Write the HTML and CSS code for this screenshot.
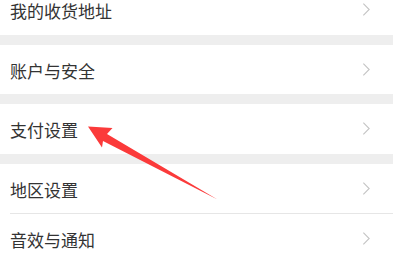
FILE: index.html
```html
<!DOCTYPE html>
<html lang="zh-CN">
<head>
    <meta charset="UTF-8">
    <meta name="viewport" content="width=device-width, initial-scale=1.0">
    <title>设置</title>
    <link rel="stylesheet" href="styles.css">
</head>
<body>
    <div class="settings">
        <div class="group">
            <div class="cell">
                <span class="cell-title">我的收货地址</span>
                <svg class="chevron" viewBox="0 0 10 16"><path d="M1.5 1.5 L8 8 L1.5 14.5"/></svg>
            </div>
        </div>
        <div class="group">
            <div class="cell">
                <span class="cell-title">账户与安全</span>
                <svg class="chevron" viewBox="0 0 10 16"><path d="M1.5 1.5 L8 8 L1.5 14.5"/></svg>
            </div>
        </div>
        <div class="group">
            <div class="cell">
                <span class="cell-title">支付设置</span>
                <svg class="chevron" viewBox="0 0 10 16"><path d="M1.5 1.5 L8 8 L1.5 14.5"/></svg>
            </div>
        </div>
        <div class="group">
            <div class="cell">
                <span class="cell-title">地区设置</span>
                <svg class="chevron" viewBox="0 0 10 16"><path d="M1.5 1.5 L8 8 L1.5 14.5"/></svg>
            </div>
            <div class="cell">
                <span class="cell-title">音效与通知</span>
                <svg class="chevron" viewBox="0 0 10 16"><path d="M1.5 1.5 L8 8 L1.5 14.5"/></svg>
            </div>
        </div>
    </div>

    <!-- 标注箭头 -->
    <svg class="pointer" width="393" height="260" viewBox="0 0 393 260">
        <polygon points="88,126.5 112.5,128 107,134 217.5,199.5 103,141 102,147.5" fill="#fb3a3a"/>
    </svg>
</body>
</html>
```

FILE: styles.css
```css
* {
    box-sizing: border-box;
}
body {
    margin: 0;
    font-family: "Noto Sans CJK SC", "Noto Sans", sans-serif;
    color: #333333;
    background-color: #ffffff;
    overflow: hidden;
}
.settings {
    margin-top: -15px;
    display: flex;
    flex-direction: column;
    gap: 10px;
    background-color: #eeeeee;
}
.group {
    background-color: #ffffff;
    padding-left: 10px;
}
.cell {
    height: 49.5px;
    display: flex;
    align-items: center;
    justify-content: space-between;
    padding-right: 22px;
    font-size: 17px;
}
.cell + .cell {
    border-top: 1px solid #e6e6e6;
    height: 49px;
}
.cell-title {
    line-height: 1;
    padding-top: 2px;
}
.chevron {
    width: 9px;
    height: 15px;
    fill: none;
    stroke: #c4c4c4;
    stroke-width: 1.2;
}
.pointer {
    position: absolute;
    top: 0;
    left: 0;
    pointer-events: none;
}
```
